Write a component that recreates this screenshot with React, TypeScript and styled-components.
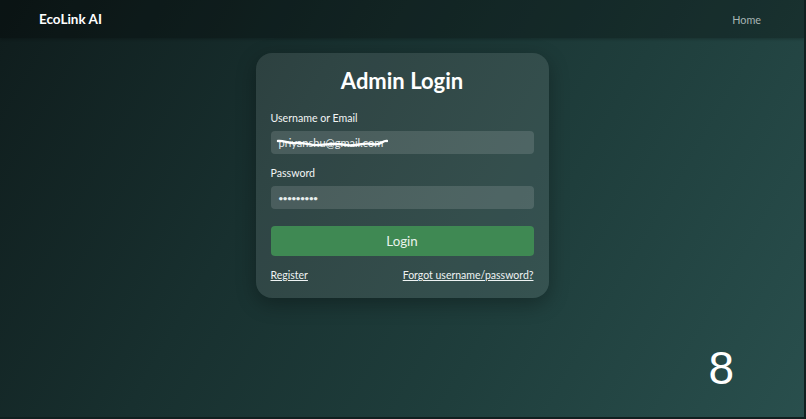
import React from "react";
import styled, { createGlobalStyle } from "styled-components";

const Global = createGlobalStyle`
  html, body { margin: 0; padding: 0; height: 100%; }
  body { font-family: Lato, "Noto Sans", sans-serif; color: #fff; }
  #root { height: 100%; }
`;

const Page = styled.div`
  position: relative;
  width: 806px;
  height: 419px;
  overflow: hidden;
  background: linear-gradient(120deg, #0f1c1c 0%, #18302f 35%, #1f3e3c 65%, #294f4d 100%);
  box-sizing: border-box;
  border-right: 2px solid #102020;
  border-bottom: 2px solid #102020;
`;

const Header = styled.header`
  height: 38px;
  display: flex;
  align-items: center;
  justify-content: space-between;
  padding: 0 43px 0 39px;
  background: rgba(0, 0, 0, 0.28);
  box-shadow: 0 1px 3px rgba(0, 0, 0, 0.25);
`;

const Brand = styled.div`
  font-size: 13.5px;
  font-weight: 700;
  color: #ffffff;
`;

const NavLink = styled.a`
  font-size: 10.8px;
  color: #a9b6b5;
  text-decoration: none;
`;

const Main = styled.main`
  display: flex;
  justify-content: center;
  padding-top: 15px;
`;

const Card = styled.div`
  width: 293px;
  box-sizing: border-box;
  padding: 13px 15px 15px;
  border-radius: 16px;
  background: rgba(255, 255, 255, 0.1);
  box-shadow: 0 6px 20px rgba(0, 0, 0, 0.3);
  display: flex;
  flex-direction: column;
`;

const Title = styled.h1`
  margin: 0 0 15px;
  text-align: center;
  font-size: 22px;
  font-weight: 700;
  line-height: 30px;
`;

const Label = styled.label`
  font-size: 10.6px;
  line-height: 15px;
  margin-bottom: 5px;
  color: #f2f5f5;
`;

const Field = styled.div`
  position: relative;
  height: 23px;
  border-radius: 4px;
  background: rgba(255, 255, 255, 0.13);
  display: flex;
  align-items: center;
  padding: 0 8px;
  margin-bottom: 12px;
  font-size: 11px;
  color: #e8eeee;
`;

const Dots = styled.span`
  font-size: 8px;
  letter-spacing: -0.3px;
  font-weight: 700;
`;

const Scribble = styled.svg`
  position: absolute;
  left: 5px;
  top: 6px;
`;

const Button = styled.button`
  margin-top: 5px;
  height: 30px;
  border: none;
  border-radius: 4px;
  background: #3f8953;
  color: #e9f3ec;
  font-family: inherit;
  font-size: 13.3px;
  cursor: pointer;
`;

const Links = styled.div`
  display: flex;
  justify-content: space-between;
  margin-top: 12px;
  font-size: 10.5px;
  line-height: 15px;
`;

const UnderLink = styled.a`
  color: #eef3f3;
  text-decoration: underline;
`;

const Counter = styled.div`
  position: absolute;
  right: 70px;
  bottom: 26px;
  font-family: "Liberation Sans", Arial, sans-serif;
  font-size: 46px;
  line-height: 1;
  color: #ffffff;
`;

export default function App() {
  return (
    <>
      <Global />
      <Page>
        <Header>
          <Brand>EcoLink AI</Brand>
          <NavLink href="#">Home</NavLink>
        </Header>
        <Main>
          <Card>
            <Title>Admin Login</Title>
            <Label>Username or Email</Label>
            <Field>
              <span>priyanshu@gmail.com</span>
              <Scribble width="112" height="12" viewBox="0 0 112 12">
                <path
                  d="M2 4 C 8 3, 12 7, 20 6 S 34 9, 44 8 S 60 6, 70 8 S 86 5, 96 7 S 106 3, 111 4"
                  stroke="#ffffff"
                  strokeWidth="2.4"
                  fill="none"
                  strokeLinecap="round"
                />
              </Scribble>
            </Field>
            <Label>Password</Label>
            <Field>
              <Dots>•••••••••</Dots>
            </Field>
            <Button>Login</Button>
            <Links>
              <UnderLink href="#">Register</UnderLink>
              <UnderLink href="#">Forgot username/password?</UnderLink>
            </Links>
          </Card>
        </Main>
        <Counter>8</Counter>
      </Page>
    </>
  );
}
